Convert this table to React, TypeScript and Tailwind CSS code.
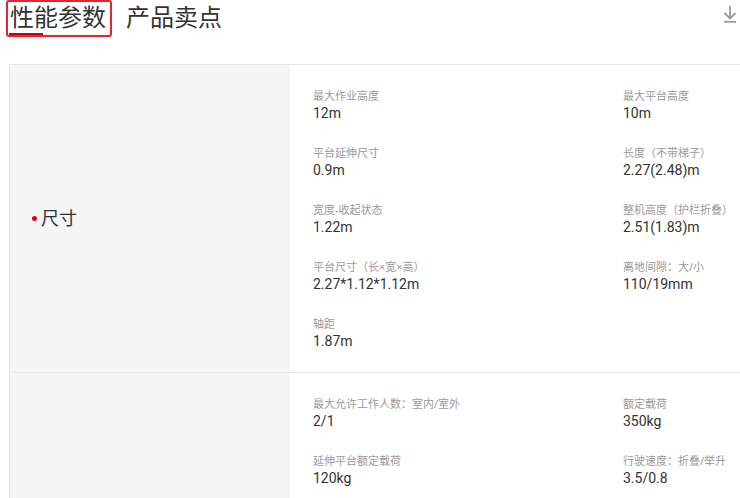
import React from "react";

type Item = { label: string; value: string };

const row1: Item[][] = [
  [
    { label: "最大作业高度", value: "12m" },
    { label: "最大平台高度", value: "10m" },
  ],
  [
    { label: "平台延伸尺寸", value: "0.9m" },
    { label: "长度（不带梯子）", value: "2.27(2.48)m" },
  ],
  [
    { label: "宽度-收起状态", value: "1.22m" },
    { label: "整机高度（护栏折叠）", value: "2.51(1.83)m" },
  ],
  [
    { label: "平台尺寸（长×宽×高）", value: "2.27*1.12*1.12m" },
    { label: "离地间隙：大/小", value: "110/19mm" },
  ],
  [{ label: "轴距", value: "1.87m" }],
];

const row2: Item[][] = [
  [
    { label: "最大允许工作人数：室内/室外", value: "2/1" },
    { label: "额定载荷", value: "350kg" },
  ],
  [
    { label: "延伸平台额定载荷", value: "120kg" },
    { label: "行驶速度：折叠/举升", value: "3.5/0.8" },
  ],
];

function Cell({ item }: { item: Item }) {
  return (
    <div className="flex flex-col">
      <div className="text-[11px] leading-[16px] text-[#9a9a9a] whitespace-nowrap">{item.label}</div>
      <div
        className="text-[14px] leading-[18px] text-[#333] whitespace-nowrap"
        style={{ fontFamily: 'Roboto, "Noto Sans CJK SC", sans-serif' }}
      >
        {item.value}
      </div>
    </div>
  );
}

function Section({ title, rows, last }: { title?: string; rows: Item[][]; last?: boolean }) {
  return (
    <div className={"flex " + (last ? "" : "border-b border-[#e6e6e6]")}>
      <div className="w-[280px] shrink-0 bg-[#f5f5f5] flex items-center pl-[22px]">
        {title && (
          <div className="flex items-center text-[18px] text-[#333]">
            <span className="w-[5px] h-[5px] rounded-full bg-[#d0021b] mr-[4px]" />
            {title}
          </div>
        )}
      </div>
      <div className="flex-1 pl-[23px] pt-[23px] pb-[22px] flex flex-col gap-[23px]">
        {rows.map((r, i) => (
          <div key={i} className="grid grid-cols-[310px_1fr]">
            {r.map((it, j) => (
              <Cell key={j} item={it} />
            ))}
          </div>
        ))}
      </div>
    </div>
  );
}

export default function App() {
  return (
    <div
      className="w-[740px] h-[498px] overflow-hidden bg-white"
      style={{ fontFamily: '"Noto Sans", "Noto Sans CJK SC", sans-serif' }}
    >
      <div className="flex justify-between items-start h-[64px]">
        <div className="flex items-start">
          <div className="relative ml-[6px] h-[37px] border-2 border-[#e8262a] rounded-[3px] pl-[2px] pr-[4px]">
            <div className="text-[24px] leading-[30px] text-[#333] whitespace-nowrap">性能参数</div>
            <span className="absolute left-[1px] bottom-[0px] w-[34px] h-[2px] bg-[#c4001a]" />
          </div>
          <div className="ml-[14px] mt-[2px] text-[24px] leading-[30px] text-[#333] whitespace-nowrap">产品卖点</div>
        </div>
        <svg width="16" height="18" viewBox="0 0 16 18" className="mt-[5px] mr-[2px]" fill="none" stroke="#999" strokeWidth="1.8">
          <path d="M8 1 V13.5" />
          <path d="M2.5 8 L8 13.5 L13.5 8" />
          <path d="M2 16.8 H14" />
        </svg>
      </div>
      <div className="ml-[9px] w-[760px] border-l border-t border-[#e6e6e6]">
        <Section title="尺寸" rows={row1} />
        <Section rows={row2} last />
      </div>
    </div>
  );
}
